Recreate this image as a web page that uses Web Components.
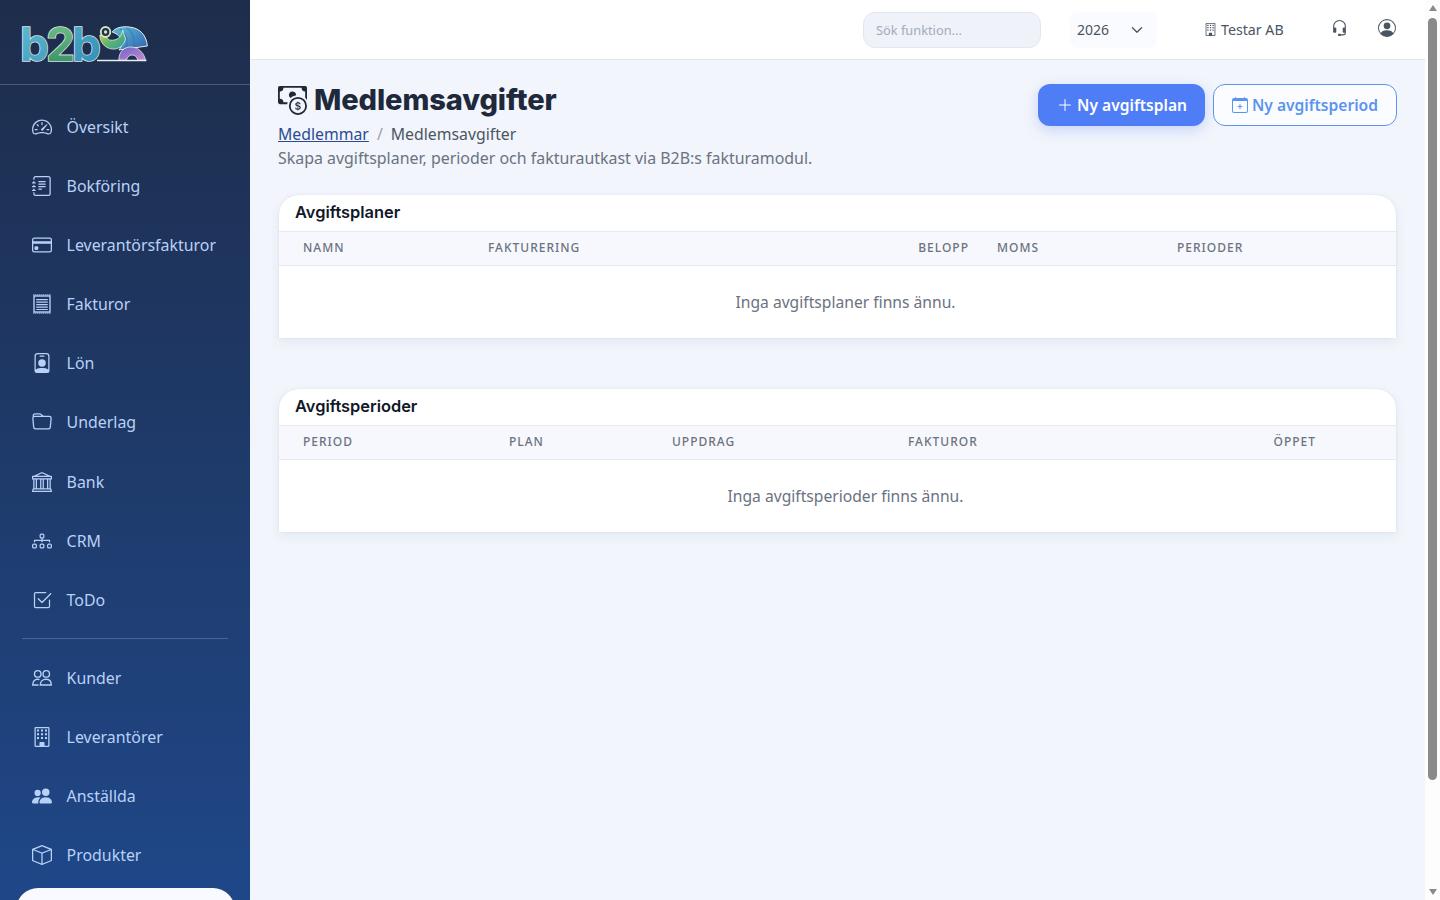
<!DOCTYPE html>
<html lang="sv"><head><meta charset="utf-8"><title>Medlemsavgifter</title>
<style>
html,body{margin:0;padding:0;background:#f2f5fb;height:100%;overflow:hidden}
body{font-family:"Noto Sans","Open Sans",sans-serif;color:#1f2937}
</style></head>
<body>
<app-shell>
  <side-nav slot="nav">
    <nav-item icon="speedometer">Översikt</nav-item>
    <nav-item icon="journal">Bokföring</nav-item>
    <nav-item icon="card">Leverantörsfakturor</nav-item>
    <nav-item icon="receipt">Fakturor</nav-item>
    <nav-item icon="badge">Lön</nav-item>
    <nav-item icon="folder">Underlag</nav-item>
    <nav-item icon="bank">Bank</nav-item>
    <nav-item icon="diagram">CRM</nav-item>
    <nav-item icon="check">ToDo</nav-item>
    <nav-divider></nav-divider>
    <nav-item icon="people">Kunder</nav-item>
    <nav-item icon="building">Leverantörer</nav-item>
    <nav-item icon="peoplefill">Anställda</nav-item>
    <nav-item icon="box">Produkter</nav-item>
    <nav-pill></nav-pill>
  </side-nav>
  <top-bar slot="top"></top-bar>
  <page-scrollbar slot="bar"></page-scrollbar>
  <page-head>
    <span slot="title">Medlemsavgifter</span>
    <a slot="crumb" href="#">Medlemmar</a>
    <span slot="current">Medlemsavgifter</span>
    <span slot="desc">Skapa avgiftsplaner, perioder och fakturautkast via B2B:s fakturamodul.</span>
    <ui-button slot="actions" kind="primary" icon="plus">Ny avgiftsplan</ui-button>
    <ui-button slot="actions" kind="outline" icon="calplus">Ny avgiftsperiod</ui-button>
  </page-head>
  <data-card heading="Avgiftsplaner" cols="185px 288px 193px 208px 1fr" empty="Inga avgiftsplaner finns ännu.">
    <span>NAMN</span><span>FAKTURERING</span><span style="text-align:right">BELOPP</span><span style="padding-left:28px">MOMS</span><span>PERIODER</span>
  </data-card>
  <data-card heading="Avgiftsperioder" cols="206px 163px 236px 170px 238px" empty="Inga avgiftsperioder finns ännu.">
    <span>PERIOD</span><span>PLAN</span><span>UPPDRAG</span><span>FAKTUROR</span><span style="text-align:right">ÖPPET</span>
  </data-card>
</app-shell>
<script>
const ICONS={
speedometer:'<path d="M8 4a.5.5 0 0 1 .5.5V6a.5.5 0 0 1-1 0V4.5A.5.5 0 0 1 8 4M3.732 5.732a.5.5 0 0 1 .707 0l.915.914a.5.5 0 1 1-.708.708l-.914-.915a.5.5 0 0 1 0-.707M2 10a.5.5 0 0 1 .5-.5h1.586a.5.5 0 0 1 0 1H2.5A.5.5 0 0 1 2 10m9.5 0a.5.5 0 0 1 .5-.5h1.5a.5.5 0 0 1 0 1H12a.5.5 0 0 1-.5-.5m.754-4.246a.39.39 0 0 0-.527-.02L7.547 9.31a.91.91 0 1 0 1.302 1.258l3.434-4.297a.39.39 0 0 0-.029-.518z"/><path fill-rule="evenodd" d="M0 10a8 8 0 1 1 15.547 2.661c-.442 1.253-1.845 1.602-2.932 1.25C11.309 13.488 9.475 13 8 13c-1.474 0-3.31.488-4.615.911-1.087.352-2.49.003-2.932-1.25A8 8 0 0 1 0 10m8-7a7 7 0 0 0-6.603 9.329c.203.575.923.876 1.68.63C4.397 12.533 6.358 12 8 12s3.604.532 4.923.96c.757.245 1.477-.056 1.68-.631A7 7 0 0 0 8 3"/>',
journal:'<path d="M5 10.5a.5.5 0 0 1 .5-.5h2a.5.5 0 0 1 0 1h-2a.5.5 0 0 1-.5-.5m0-2a.5.5 0 0 1 .5-.5h5a.5.5 0 0 1 0 1h-5a.5.5 0 0 1-.5-.5m0-2a.5.5 0 0 1 .5-.5h5a.5.5 0 0 1 0 1h-5a.5.5 0 0 1-.5-.5m0-2a.5.5 0 0 1 .5-.5h5a.5.5 0 0 1 0 1h-5a.5.5 0 0 1-.5-.5"/><path d="M3 0h10a2 2 0 0 1 2 2v12a2 2 0 0 1-2 2H3a2 2 0 0 1-2-2v-1h1v1a1 1 0 0 0 1 1h10a1 1 0 0 0 1-1V2a1 1 0 0 0-1-1H3a1 1 0 0 0-1 1v1H1V2a2 2 0 0 1 2-2"/><path d="M1 5v-.5a.5.5 0 0 1 1 0V5h.5a.5.5 0 0 1 0 1h-2a.5.5 0 0 1 0-1zm0 3v-.5a.5.5 0 0 1 1 0V8h.5a.5.5 0 0 1 0 1h-2a.5.5 0 0 1 0-1zm0 3v-.5a.5.5 0 0 1 1 0v.5h.5a.5.5 0 0 1 0 1h-2a.5.5 0 0 1 0-1z"/>',
card:'<path d="M0 4a2 2 0 0 1 2-2h12a2 2 0 0 1 2 2v8a2 2 0 0 1-2 2H2a2 2 0 0 1-2-2zm2-1a1 1 0 0 0-1 1v1h14V4a1 1 0 0 0-1-1zm13 4H1v5a1 1 0 0 0 1 1h12a1 1 0 0 0 1-1z"/><path d="M2 10a1 1 0 0 1 1-1h1a1 1 0 0 1 1 1v1a1 1 0 0 1-1 1H3a1 1 0 0 1-1-1z"/>',
receipt:'<rect x="1.6" y="1.6" width="12.8" height="12.8" fill="none" stroke="currentColor" stroke-width="1.1"/><path d="M1 .7h14M1 15.3h14" stroke="currentColor" stroke-width="1" stroke-dasharray=".9 .7" fill="none"/><path d="M3.4 4h9.2v1H3.4zM3.4 6h9.2v1H3.4zM3.4 8h9.2v1H3.4zM3.4 10h9.2v1H3.4zM3.4 12h9.2v.8H3.4z"/>',
badge:'<path d="M6.5 2a.5.5 0 0 0 0 1h3a.5.5 0 0 0 0-1zM11 8a3 3 0 1 1-6 0 3 3 0 0 1 6 0"/><path d="M4.5 0A2.5 2.5 0 0 0 2 2.5V14a2 2 0 0 0 2 2h8a2 2 0 0 0 2-2V2.5A2.5 2.5 0 0 0 11.5 0zM3 2.5A1.5 1.5 0 0 1 4.5 1h7A1.5 1.5 0 0 1 13 2.5v10.795a4.2 4.2 0 0 0-.776-.492C11.392 12.387 10.063 12 8 12s-3.392.387-4.224.803a4.2 4.2 0 0 0-.776.492z"/>',
folder:'<path d="M.54 3.87.5 3a2 2 0 0 1 2-2h3.672a2 2 0 0 1 1.414.586l.828.828A2 2 0 0 0 9.828 3h3.982a2 2 0 0 1 1.992 2.181l-.637 7A2 2 0 0 1 13.174 14H2.826a2 2 0 0 1-1.991-1.819l-.637-7a2 2 0 0 1 .342-1.31zM2.19 4a1 1 0 0 0-.996 1.09l.637 7a1 1 0 0 0 .995.91h10.348a1 1 0 0 0 .995-.91l.637-7A1 1 0 0 0 13.81 4zm4.69-1.707A1 1 0 0 0 6.172 2H2.5a1 1 0 0 0-1 .981l.006.139q.323-.119.684-.12h5.396z"/>',
bank:'<path d="m8 0 6.61 3h.89a.5.5 0 0 1 .5.5v2a.5.5 0 0 1-.5.5H15v7a.5.5 0 0 1 .485.38l.5 2a.498.498 0 0 1-.485.62H.5a.498.498 0 0 1-.485-.62l.5-2A.5.5 0 0 1 1 13V6H.5a.5.5 0 0 1-.5-.5v-2A.5.5 0 0 1 .5 3h.89zM3.777 3h8.447L8 1zM2 6v7h1V6zm2 0v7h2.5V6zm3.5 0v7h1V6zm2 0v7H12V6zM13 6v7h1V6zm2-1V4H1v1zm-.39 9H1.39l-.25 1h13.72z"/>',
diagram:'<path d="M6 3.5A1.5 1.5 0 0 1 7.5 2h1A1.5 1.5 0 0 1 10 3.5v1A1.5 1.5 0 0 1 8.5 6v1H14a.5.5 0 0 1 .5.5v1a.5.5 0 0 1-1 0V8h-5v.5a.5.5 0 0 1-1 0V8h-5v.5a.5.5 0 0 1-1 0v-1A.5.5 0 0 1 2 7h5.5V6A1.5 1.5 0 0 1 6 4.5zM8.5 5a.5.5 0 0 0 .5-.5v-1a.5.5 0 0 0-.5-.5h-1a.5.5 0 0 0-.5.5v1a.5.5 0 0 0 .5.5zM0 11.5A1.5 1.5 0 0 1 1.5 10h1A1.5 1.5 0 0 1 4 11.5v1A1.5 1.5 0 0 1 2.5 14h-1A1.5 1.5 0 0 1 0 12.5zm1.5-.5a.5.5 0 0 0-.5.5v1a.5.5 0 0 0 .5.5h1a.5.5 0 0 0 .5-.5v-1a.5.5 0 0 0-.5-.5zm4.5.5A1.5 1.5 0 0 1 7.5 10h1a1.5 1.5 0 0 1 1.5 1.5v1A1.5 1.5 0 0 1 8.5 14h-1A1.5 1.5 0 0 1 6 12.5zm1.5-.5a.5.5 0 0 0-.5.5v1a.5.5 0 0 0 .5.5h1a.5.5 0 0 0 .5-.5v-1a.5.5 0 0 0-.5-.5zm4.5.5a1.5 1.5 0 0 1 1.5-1.5h1a1.5 1.5 0 0 1 1.5 1.5v1a1.5 1.5 0 0 1-1.5 1.5h-1a1.5 1.5 0 0 1-1.5-1.5zm1.5-.5a.5.5 0 0 0-.5.5v1a.5.5 0 0 0 .5.5h1a.5.5 0 0 0 .5-.5v-1a.5.5 0 0 0-.5-.5z"/>',
check:'<path d="M3 14.5A1.5 1.5 0 0 1 1.5 13V3A1.5 1.5 0 0 1 3 1.5h8a.5.5 0 0 1 0 1H3a.5.5 0 0 0-.5.5v10a.5.5 0 0 0 .5.5h10a.5.5 0 0 0 .5-.5V8a.5.5 0 0 1 1 0v5a1.5 1.5 0 0 1-1.5 1.5z"/><path d="m8.354 10.354 7-7a.5.5 0 0 0-.708-.708L8 9.293 5.354 6.646a.5.5 0 1 0-.708.708l3 3a.5.5 0 0 0 .708 0"/>',
people:'<g fill="none" stroke="currentColor" stroke-width="1.1"><circle cx="4.6" cy="4.7" r="2.6"/><circle cx="11.4" cy="4.7" r="2.6"/><path d="M6.6 13.6c0-3 2.1-4.6 4.7-4.6s4.1 1.6 4.1 4.6z"/><path d="M6 9.3c-.4-.2-.9-.3-1.4-.3C2.2 9 .6 10.6.6 13.6h4.6"/></g>',
building:'<path d="M2 1a1 1 0 0 1 1-1h10a1 1 0 0 1 1 1v14a1 1 0 0 1-1 1H3a1 1 0 0 1-1-1zm11 0H3v14h3v-2.5a.5.5 0 0 1 .5-.5h3a.5.5 0 0 1 .5.5V15h3z"/><path d="M4 2h1.6v1.6H4zM7.2 2h1.6v1.6H7.2zM10.4 2H12v1.6h-1.6zM4 5h1.6v1.6H4zM7.2 5h1.6v1.6H7.2zM10.4 5H12v1.6h-1.6zM4 8h1.6v1.6H4zM7.2 8h1.6v1.6H7.2zM10.4 8H12v1.6h-1.6z"/>',
peoplefill:'<path d="M7 14s-1 0-1-1 1-4 5-4 5 3 5 4-1 1-1 1zm4-6a3 3 0 1 0 0-6 3 3 0 0 0 0 6m-5.784 6A2.24 2.24 0 0 1 5 13c0-1.355.68-2.75 1.936-3.72A6.3 6.3 0 0 0 5 9c-4 0-5 3-5 4s1 1 1 1zM4.5 8a2.5 2.5 0 1 0 0-5 2.5 2.5 0 0 0 0 5"/>',
box:'<path d="M8.186 1.113a.5.5 0 0 0-.372 0L1.846 3.5 8 5.961 14.154 3.5zM15 4.239l-6.5 2.6v7.922l6.5-2.6V4.24zM7.5 14.762V6.838L1 4.239v7.925zM7.443.184a1.5 1.5 0 0 1 1.114 0l7.129 2.852A.5.5 0 0 1 16 3.5v8.662a1 1 0 0 1-.629.928l-7.185 2.874a.5.5 0 0 1-.372 0L.63 13.09a1 1 0 0 1-.63-.928V3.5a.5.5 0 0 1 .314-.464z"/>',
headset:'<path d="M8 1a5 5 0 0 0-5 5v1h1a1 1 0 0 1 1 1v3a1 1 0 0 1-1 1H3a1 1 0 0 1-1-1V6a6 6 0 1 1 12 0v6a2.5 2.5 0 0 1-2.5 2.5H9.366a1 1 0 0 1-.866.5h-1a1 1 0 1 1 0-2h1a1 1 0 0 1 .866.5H11.5A1.5 1.5 0 0 0 13 12h-1a1 1 0 0 1-1-1V8a1 1 0 0 1 1-1h1V6a5 5 0 0 0-5-5"/>',
user:'<path d="M11 6a3 3 0 1 1-6 0 3 3 0 0 1 6 0"/><path fill-rule="evenodd" d="M0 8a8 8 0 1 1 16 0A8 8 0 0 1 0 8m8-7a7 7 0 0 0-5.468 11.37C3.242 11.226 4.805 10 8 10s4.757 1.225 5.468 2.37A7 7 0 0 0 8 1"/>',
chevron:'<path fill-rule="evenodd" stroke="currentColor" stroke-width=".9" d="M1.646 4.646a.5.5 0 0 1 .708 0L8 10.293l5.646-5.647a.5.5 0 0 1 .708.708l-6 6a.5.5 0 0 1-.708 0l-6-6a.5.5 0 0 1 0-.708"/>',
cash:'<path fill-rule="evenodd" d="M11 15a4 4 0 1 0 0-8 4 4 0 0 0 0 8m5-4a5 5 0 1 1-10 0 5 5 0 0 1 10 0"/><path d="M9.438 11.944c.047.596.518 1.06 1.363 1.116v.44h.375v-.443c.875-.061 1.386-.529 1.386-1.207 0-.618-.39-.936-1.09-1.1l-.296-.07v-1.2c.376.043.614.248.671.532h.658c-.047-.575-.54-1.024-1.329-1.073V8.5h-.375v.45c-.747.073-1.255.522-1.255 1.158 0 .562.378.92 1.007 1.066l.248.061v1.272c-.384-.058-.639-.27-.696-.563h-.668zm1.36-1.354c-.369-.085-.569-.26-.569-.522 0-.294.216-.514.572-.578v1.1zm.432.746c.449.104.655.272.655.569 0 .339-.257.571-.709.614v-1.195z"/><path d="M1 0a1 1 0 0 0-1 1v8a1 1 0 0 0 1 1h4.083q.088-.517.258-1H3a2 2 0 0 0-2-2V3a2 2 0 0 0 2-2h10a2 2 0 0 0 2 2v3.528c.38.34.717.728 1 1.154V1a1 1 0 0 0-1-1z"/><path d="M9.998 5.083 10 5a2 2 0 1 0-3.132 1.65 6 6 0 0 1 3.13-1.567"/>',
plus:'<path fill-rule="evenodd" d="M8 2a.5.5 0 0 1 .5.5v5h5a.5.5 0 0 1 0 1h-5v5a.5.5 0 0 1-1 0v-5h-5a.5.5 0 0 1 0-1h5v-5A.5.5 0 0 1 8 2"/>',
calplus:'<path d="M8 7a.5.5 0 0 1 .5.5V9H10a.5.5 0 0 1 0 1H8.5v1.5a.5.5 0 0 1-1 0V10H6a.5.5 0 0 1 0-1h1.5V7.5A.5.5 0 0 1 8 7"/><path d="M3.5 0a.5.5 0 0 1 .5.5V1h8V.5a.5.5 0 0 1 1 0V1h1a2 2 0 0 1 2 2v11a2 2 0 0 1-2 2H2a2 2 0 0 1-2-2V3a2 2 0 0 1 2-2h1V.5a.5.5 0 0 1 .5-.5M1 4v10a1 1 0 0 0 1 1h12a1 1 0 0 0 1-1V4z"/>'
};
function def(name,html,setup){
  customElements.define(name,class extends HTMLElement{
    constructor(){super();this.attachShadow({mode:'open'});}
    connectedCallback(){
      if(this._done)return;this._done=true;
      this.shadowRoot.innerHTML=typeof html==='function'?html(this):html;
      if(setup)setup(this);
    }
  });
}
def('ui-icon',h=>`<style>:host{display:inline-flex;width:var(--s,16px);height:var(--s,16px);flex:none}svg{width:100%;height:100%;display:block;fill:currentColor}</style><svg viewBox="0 0 16 16" aria-hidden="true">${ICONS[h.getAttribute('name')]||''}</svg>`);
def('app-shell',`<style>
:host{display:grid;grid-template-columns:250px minmax(0,1fr) 15px;grid-template-rows:60px minmax(0,1fr);height:100vh;overflow:hidden;background:#f2f5fb}
.nav{grid-row:1 / span 2;height:100vh}
.bar{grid-column:3;grid-row:1 / span 2;height:100vh}
.main{grid-column:2;padding:24px 28px 0;display:flex;flex-direction:column;min-width:0}
</style><div class="nav"><slot name="nav"></slot></div><div><slot name="top"></slot></div><div class="bar"><slot name="bar"></slot></div><div class="main"><slot></slot></div>`);
def('page-scrollbar',`<style>
:host{display:flex;flex-direction:column;align-items:center;height:100vh;background:#fdfdfd;box-sizing:border-box;padding-top:5px}
.up,.down{width:0;height:0;border-left:4.5px solid transparent;border-right:4.5px solid transparent;flex:none}
.up{border-bottom:6px solid #8a8a8a}
.down{border-top:6px solid #8a8a8a;margin-top:109px}
.thumb{width:9px;height:762px;margin-top:7px;background:#8a8a8a;border-radius:4.5px;flex:none}
</style><div class="up"></div><div class="thumb"></div><div class="down"></div>`);
def('side-nav',`<style>
:host{display:block;height:100vh;overflow:hidden;background:linear-gradient(180deg,#1e2d4b 0%,#1f4788 100%);font-family:"Noto Sans",sans-serif}
.logo{box-sizing:border-box;border-bottom:1px solid rgba(255,255,255,.2);padding:14px 0 0 21px;height:85px}
.logo svg{display:block}
.list{padding-top:12.2px;display:flex;flex-direction:column}
text{font-family:"Inter",sans-serif;font-weight:700}
</style><div class="logo"><svg width="132" height="60" viewBox="0 -4 132 60">
<defs>
<linearGradient id="g1" x1="0" y1="0" x2="1" y2="1"><stop offset="0" stop-color="#63bcd2"/><stop offset="1" stop-color="#2e8cb5"/></linearGradient>
<linearGradient id="g2" x1="0" y1="0" x2="0" y2="1"><stop offset="0" stop-color="#7ac38d"/><stop offset="1" stop-color="#2f8d5c"/></linearGradient>
<linearGradient id="g3" x1="0" y1="0" x2="1" y2="1"><stop offset="0" stop-color="#e0d23f"/><stop offset=".5" stop-color="#5fb56b"/><stop offset="1" stop-color="#2d9aa8"/></linearGradient>
<linearGradient id="g4" x1="0" y1="0" x2="1" y2="1"><stop offset="0" stop-color="#5cc0d0"/><stop offset="1" stop-color="#3262b5"/></linearGradient>
<linearGradient id="g5" x1="0" y1="0" x2="1" y2="1"><stop offset="0" stop-color="#6a62c8"/><stop offset="1" stop-color="#c88ad0"/></linearGradient>
</defs>
<text x="-1" y="43" stroke="#dfe6ea" stroke-width="1.6" paint-order="stroke" font-size="46" letter-spacing="-3"><tspan fill="url(#g1)">b</tspan><tspan fill="url(#g2)">2</tspan><tspan fill="url(#g1)">b</tspan></text>
<g transform="translate(3.8 0) scale(.95 1)">
<path d="M76 42.5h52" stroke="#e8edf0" stroke-width="1.6"/>
<path d="M92 14c3-4 10-6 18-5 12 1 18 9 19 19l-30 4c5-5 5-14-7-18z" fill="url(#g4)" stroke="#e8edf0" stroke-width="1"/>
<path d="M107 10c6 3 9 9 8 19M100 11c6 3 9 10 7 18" fill="none" stroke="#2f6fb5" stroke-width="1.2" opacity=".6"/>
<path d="M99 42c0-9 6-13 13-13 8 0 14 7 15 13h-8c-1-3-3-5-6-5s-5 2-6 5z" fill="url(#g5)" stroke="#e8edf0" stroke-width=".8"/>
<path d="M79 17c0 9 8 15 16 14 6-1 10-5 11-10l-3-9c-1 6-4 9-9 10-5 1-8-1-8-5z" fill="url(#g3)" stroke="#e8edf0" stroke-width=".8"/>
<circle cx="85" cy="14" r="5" fill="#22324f" stroke="#d6e6c0" stroke-width="2"/><circle cx="85" cy="14" r="1.7" fill="#dfe8d0"/>
</g>
</svg></div><div class="list"><slot></slot></div>`);
def('nav-item',h=>`<style>
:host{display:flex;align-items:center;height:59.125px;flex:none;padding-left:32px;color:#b9d1f7;font-size:15.9px}
ui-icon{--s:20px;margin-right:14.6px}
</style><ui-icon name="${h.getAttribute('icon')}"></ui-icon><slot></slot>`);
def('nav-divider',`<style>:host{display:block;height:1px;margin:8.5px 22px 9.5px;background:rgba(255,255,255,.2);flex:none}</style>`);
def('nav-pill',`<style>:host{display:block;height:60px;margin:3.5px 15px 0 16px;background:#f8faff;border-radius:22px;flex:none}</style>`);
def('top-bar',`<style>
:host{display:flex;align-items:center;height:60px;box-sizing:border-box;background:#fff;border-bottom:1px solid #e2e6ee;padding:0 0 0 613px;color:#4b5563;font-family:"Noto Sans",sans-serif}
.search{width:178px;height:36px;box-sizing:border-box;border:1px solid #e3e7f0;border-radius:12px;background:#eff2f9;color:#a3abba;font-size:12.8px;display:flex;align-items:center;padding-left:12px}
.year{margin-left:29px;width:87px;height:36px;box-sizing:border-box;background:#fafbfe;border-radius:8px;font-size:14px;display:flex;align-items:center;padding-left:7px;color:#4b5563}
.year ui-icon{--s:12px;margin-left:22px;color:#374151}
.org{margin-left:47px;display:flex;align-items:center;font-size:14.2px;color:#4b5563}
.org ui-icon{--s:13px;margin-right:4px}
.sup{margin-left:47.5px;--s:17px;color:#4b5563;margin-bottom:3px}
.usr{margin-left:30px;--s:18px;color:#4b5563;margin-bottom:3px}
</style><div class="search">Sök funktion...</div><div class="year">2026<ui-icon name="chevron"></ui-icon></div><div class="org"><ui-icon name="building"></ui-icon>Testar AB</div><ui-icon class="sup" name="headset"></ui-icon><ui-icon class="usr" name="user"></ui-icon>`);
def('page-head',`<style>
:host{display:flex;justify-content:space-between;align-items:flex-start;font-family:"Noto Sans",sans-serif;margin-bottom:25px}
.t{display:flex;align-items:center;height:32px;margin-bottom:6px}
.t ui-icon{--s:29px;margin-right:7px;color:#1f2937}
h1{margin:0;font:800 29px/32px "Inter",sans-serif;color:#1e293b;letter-spacing:-.1px}
.c{font-size:15.8px;line-height:24px;color:#4b5563}
.c ::slotted(a){color:#2b4c93}
.sep{color:#9ca3af;margin:0 8px}
.d{font-size:15.93px;line-height:24px;color:#6b7280}
.a{display:flex;gap:8px}
</style><div><div class="t"><ui-icon name="cash"></ui-icon><h1><slot name="title"></slot></h1></div>
<div class="c"><slot name="crumb"></slot><span class="sep">/</span><slot name="current"></slot></div>
<div class="d"><slot name="desc"></slot></div></div><div class="a"><slot name="actions"></slot></div>`);
def('ui-button',h=>{const k=h.getAttribute('kind');return `<style>
:host{display:inline-flex;align-items:center;height:42px;box-sizing:border-box;border-radius:12px;font:600 15.6px "Noto Sans",sans-serif;white-space:nowrap;
${k==='primary'?'background:#4f7df5;color:#fff;padding:0 18px 0 19px;box-shadow:0 4px 14px rgba(79,125,245,.28);':'background:#fbfcff;color:#5b94ef;border:1px solid #5b94ef;padding:0 18px;'}}
ui-icon{--s:16px;margin-right:4px}
</style><ui-icon name="${h.getAttribute('icon')}"></ui-icon><slot></slot>`});
def('data-card',h=>`<style>
:host{display:block;margin:0 1px 51px;background:#fff;border-radius:20px 20px 0 0;box-shadow:0 4px 12px rgba(30,50,110,.07),0 0 2px rgba(30,50,110,.1);font-family:"Noto Sans",sans-serif;overflow:hidden}
.h{height:36px;box-sizing:border-box;display:flex;align-items:center;padding:0 16px 2px;font:600 16.4px "Inter",sans-serif;color:#111827}
.g{display:grid;grid-template-columns:${h.getAttribute('cols')};height:35px;box-sizing:border-box;align-items:center;padding:0 0 3px 24px;background:#f7f8fd;border-top:1px solid #e6e8f2;border-bottom:1px solid #e6e8f2;font-size:12px;font-weight:500;letter-spacing:1px;color:#6b7280}
.e{height:72px;display:flex;align-items:center;justify-content:center;padding-left:16px;font-size:15.65px;color:#6b7280}
</style><div class="h">${h.getAttribute('heading')}</div><div class="g"><slot></slot></div><div class="e">${h.getAttribute('empty')}</div>`);
</script>
</body></html>
